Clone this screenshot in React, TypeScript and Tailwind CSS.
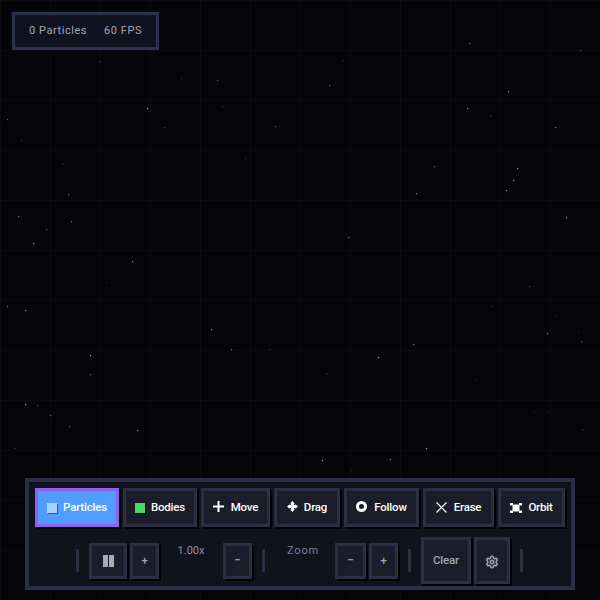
import { Settings } from "lucide-react";
import type { ReactNode } from "react";

// [x, y, opacity] — star field behind the toolbar
const STARS: [number, number, number][] = [
  [99, 61, 0.3], [181, 78, 0.2], [217, 80, 0.35], [147, 108, 0.7], [222, 106, 0.25], [7, 119, 0.4], [164, 127, 0.25],
  [275, 126, 0.4], [21, 140, 0.25], [62, 163, 0.25], [245, 158, 0.2], [94, 180, 0.1], [68, 194, 0.5], [18, 216, 0.5],
  [71, 221, 0.5], [46, 229, 0.4], [469, 43, 0.5], [580, 50, 0.3], [342, 60, 0.25], [329, 85, 0.5], [508, 91, 0.6],
  [467, 108, 0.6], [490, 115, 0.25], [555, 127, 0.5], [434, 166, 0.4], [517, 168, 0.6], [513, 180, 0.6], [416, 193, 0.5],
  [506, 190, 0.6], [566, 217, 0.6], [348, 237, 0.5], [33, 243, 0.6], [132, 261, 0.6], [106, 282, 0.15], [7, 306, 0.5],
  [25, 310, 0.6], [211, 329, 0.6], [231, 349, 0.5], [269, 349, 0.2], [90, 355, 0.7], [90, 374, 0.4], [25, 404, 0.7],
  [37, 405, 0.3], [50, 415, 0.4], [69, 426, 0.4], [137, 430, 0.6], [14, 448, 0.3], [529, 286, 0.3], [492, 306, 0.2],
  [556, 316, 0.15], [547, 333, 0.5], [578, 331, 0.15], [581, 341, 0.4], [413, 344, 0.5], [378, 357, 0.7], [326, 373, 0.3],
  [476, 380, 0.15], [534, 412, 0.15], [547, 412, 0.15], [582, 429, 0.3], [426, 448, 0.6], [322, 460, 0.7], [390, 459, 0.5],
  [351, 470, 0.15],
];

const font = "font-['Roboto','Liberation_Sans',sans-serif]";

function ToolButton({ label, icon, width, active }: { label: string; icon: ReactNode; width: string; active?: boolean }) {
  return (
    <button
      className={`flex h-[39px] items-center justify-center gap-[6px] border-[3px] text-[11.5px] font-medium tracking-[-0.2px] text-white shadow-[2px_2px_0_#000] ${width} ${
        active ? "border-[#9061f0] bg-[#4f9dff]" : "border-[#2c2f44] bg-[#1b1d2b]"
      }`}
    >
      {icon}
      {label}
    </button>
  );
}

function SmallButton({ children, width, height = "h-[36px]" }: { children: ReactNode; width: string; height?: string }) {
  return (
    <button
      className={`flex shrink-0 items-center justify-center border-[3px] border-[#2c2f44] bg-[#1b1d2b] text-[11.5px] font-medium tracking-[-0.2px] text-[#a0a4b8] shadow-[2px_2px_0_#000] ${width} ${height}`}
    >
      {children}
    </button>
  );
}

function Divider({ right = "mr-[10px]" }: { right?: string }) {
  return <div className={`ml-[10px] h-[23px] w-[3px] shrink-0 bg-[#2c2f44] ${right}`} />;
}

export default function App() {
  return (
    <div
      className={`relative flex h-[600px] w-[600px] flex-col justify-between overflow-hidden bg-[#050508] bg-[linear-gradient(#0b0b10_1px,transparent_1px),linear-gradient(90deg,#0b0b10_1px,transparent_1px)] bg-[size:50px_50px] px-[25px] pt-[12px] pb-[10px] ${font}`}
    >
      <svg className="absolute inset-0" width="600" height="600">
        {STARS.map(([x, y, o]) => (
          <rect key={`${x}-${y}`} x={x} y={y} width="1.2" height="1.2" fill="#e8e8f8" opacity={o} />
        ))}
      </svg>

      {/* stats */}
      <div className="relative -ml-[13px] flex h-[38px] w-[147px] items-center justify-center gap-[17px] border-[3px] border-[#2c3050] bg-[#10131f] text-[11px] tracking-[0.55px] text-[#a0a4b8]">
        <span>0 Particles</span>
        <span>60 FPS</span>
      </div>

      {/* toolbar */}
      <div className="relative flex h-[112px] w-[550px] flex-col gap-[10px] border-[4px] border-[#2a2e48] bg-[#10121c] px-[6px] pt-[6px]">
        <div className="flex gap-[4px]">
          <ToolButton
            active
            width="w-[84px]"
            label="Particles"
            icon={<span className="h-[10px] w-[10px] bg-[#a9d4ff] shadow-[1px_1px_0_#2b5a94]" />}
          />
          <ToolButton
            width="w-[74px]"
            label="Bodies"
            icon={<span className="h-[10px] w-[10px] bg-[#45d965] shadow-[1px_1px_0_#000]" />}
          />
          <ToolButton
            width="w-[69px]"
            label="Move"
            icon={
              <svg width="11" height="11" viewBox="0 0 11 11" fill="#fff" className="mr-[1px] mb-[2px]">
                <path d="M4.5 0h2v4.500H11v2H6.500V11h-2V6.500H0v-2h4.500z" />
              </svg>
            }
          />
          <ToolButton
            width="w-[66px]"
            label="Drag"
            icon={
              <svg width="11" height="11" viewBox="0 0 11 11" fill="#fff" className="mb-[2px]">
                <path d="M5.500 0 7.500 2.300 6.700 4.300 8.700 3.500 11 5.500 8.700 7.500 6.700 6.700 7.500 8.700 5.500 11 3.500 8.700 4.300 6.700 2.300 7.500 0 5.500 2.300 3.500 4.300 4.300 3.500 2.300z" />
              </svg>
            }
          />
          <ToolButton
            width="w-[75px]"
            label="Follow"
            icon={<span className="mr-[1px] mb-[2px] h-[11px] w-[11px] rounded-full border-[3px] border-white" />}
          />
          <ToolButton
            width="w-[71px]"
            label="Erase"
            icon={
              <svg width="11" height="11" viewBox="0 0 11 11" stroke="#fff" strokeWidth="1.200" className="mr-[1px] mb-[1px]">
                <path d="M.5.5l10 10M10.500.5l-10 10" />
              </svg>
            }
          />
          <ToolButton
            width="w-[67px]"
            label="Orbit"
            icon={
              <svg width="12" height="10" viewBox="0 0 12 10" fill="#fff">
                <rect x="2.500" y="1.500" width="7" height="7" rx="1.500" />
                <rect x="0" y="0" width="3" height="2.500" />
                <rect x="9" y="0" width="3" height="2.500" />
                <rect x="0" y="7.500" width="3" height="2.500" />
                <rect x="9" y="7.500" width="3" height="2.500" />
              </svg>
            }
          />
        </div>

        <div className="flex items-center justify-center">
          <Divider />
          <SmallButton width="w-[38px]">
            <span className="flex gap-[1px]">
              <span className="h-[12px] w-[5px] bg-[#a6aabd]" />
              <span className="h-[12px] w-[5px] bg-[#a6aabd]" />
            </span>
          </SmallButton>
          <div className="w-[3px]" />
          <SmallButton width="w-[29px]">+</SmallButton>
          <span className="w-[64px] pb-[19px] text-center text-[11px] text-[#8b8fa3]">1.00x</span>
          <SmallButton width="w-[29px]">−</SmallButton>
          <Divider right="mr-0" />
          <span className="w-[70px] pb-[19px] pl-[6px] text-center text-[11px] tracking-[0.8px] text-[#7d8195]">Zoom</span>
          <SmallButton width="w-[31px]">−</SmallButton>
          <div className="w-[3px]" />
          <SmallButton width="w-[29px]">+</SmallButton>
          <Divider />
          <SmallButton width="w-[50px]" height="h-[47px]">Clear</SmallButton>
          <div className="w-[3px]" />
          <SmallButton width="w-[36px]" height="h-[47px]">
            <Settings size={14} strokeWidth={2.6} className="mt-[3px]" />
          </SmallButton>
          <Divider right="mr-[11px]" />
        </div>
      </div>
    </div>
  );
}
